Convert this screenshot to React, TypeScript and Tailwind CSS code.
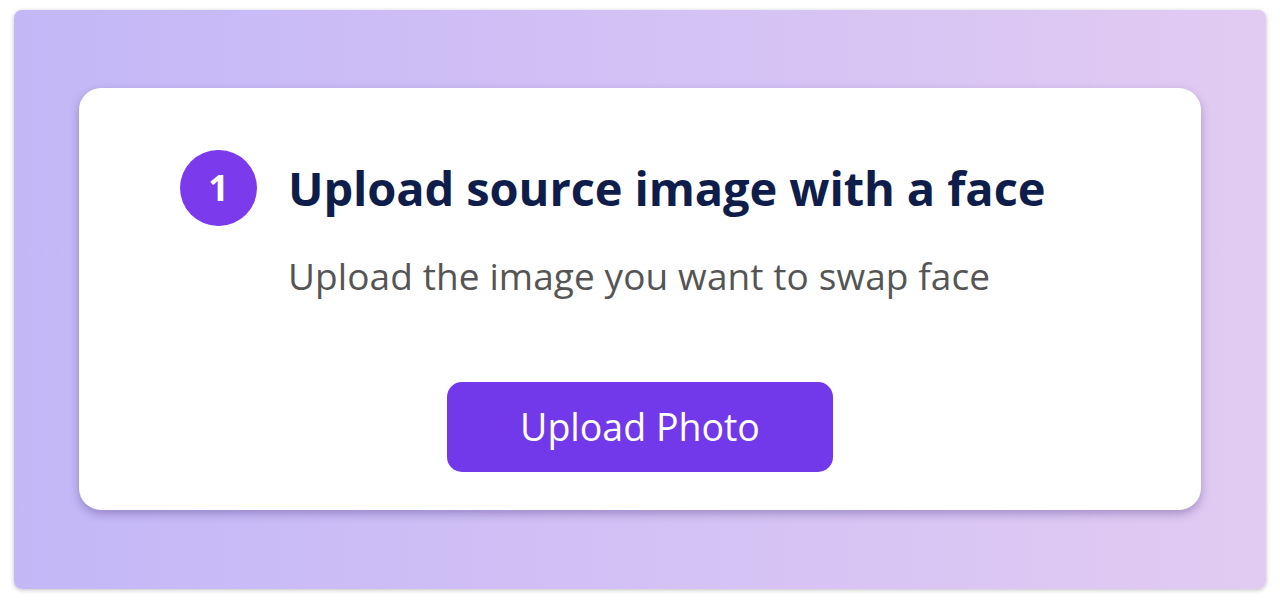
import React from 'react';

const App: React.FC = () => {
  return (
    <div className="w-[1280px] h-[606px] bg-white px-[14px] pt-[10px] pb-[17px] font-['Open_Sans',sans-serif]">
      <div className="h-full rounded-lg bg-gradient-to-r from-[#c3b7f7] to-[#e2cbf2] shadow-[0_1px_4px_rgba(0,0,0,0.25)] px-[65px] pt-[78px]">
        <div className="h-[422px] rounded-[22px] bg-white shadow-[0_4px_10px_rgba(60,40,120,0.35)] pt-[62px]">
          <div className="pl-[101px]">
            <div className="flex items-center gap-[31px]">
              <div className="w-[77px] h-[76px] shrink-0 rounded-full bg-[#7b3aec] flex items-center justify-center text-white text-[36px] font-bold">
                1
              </div>
              <h1 className="text-[47px] leading-[56px] font-bold text-[#0f1d4a] tracking-[-0.1px]">
                Upload source image with a face
              </h1>
            </div>
            <p className="ml-[108px] mt-[28px] text-[37px] leading-[44px] text-[#555555] tracking-[0.1px]">
              Upload the image you want to swap face
            </p>
          </div>
          <div className="flex justify-center mt-[84px]">
            <button className="w-[386px] h-[90px] rounded-[15px] bg-[#7239ea] text-white text-[37.5px]">
              Upload Photo
            </button>
          </div>
        </div>
      </div>
    </div>
  );
};

export default App;
